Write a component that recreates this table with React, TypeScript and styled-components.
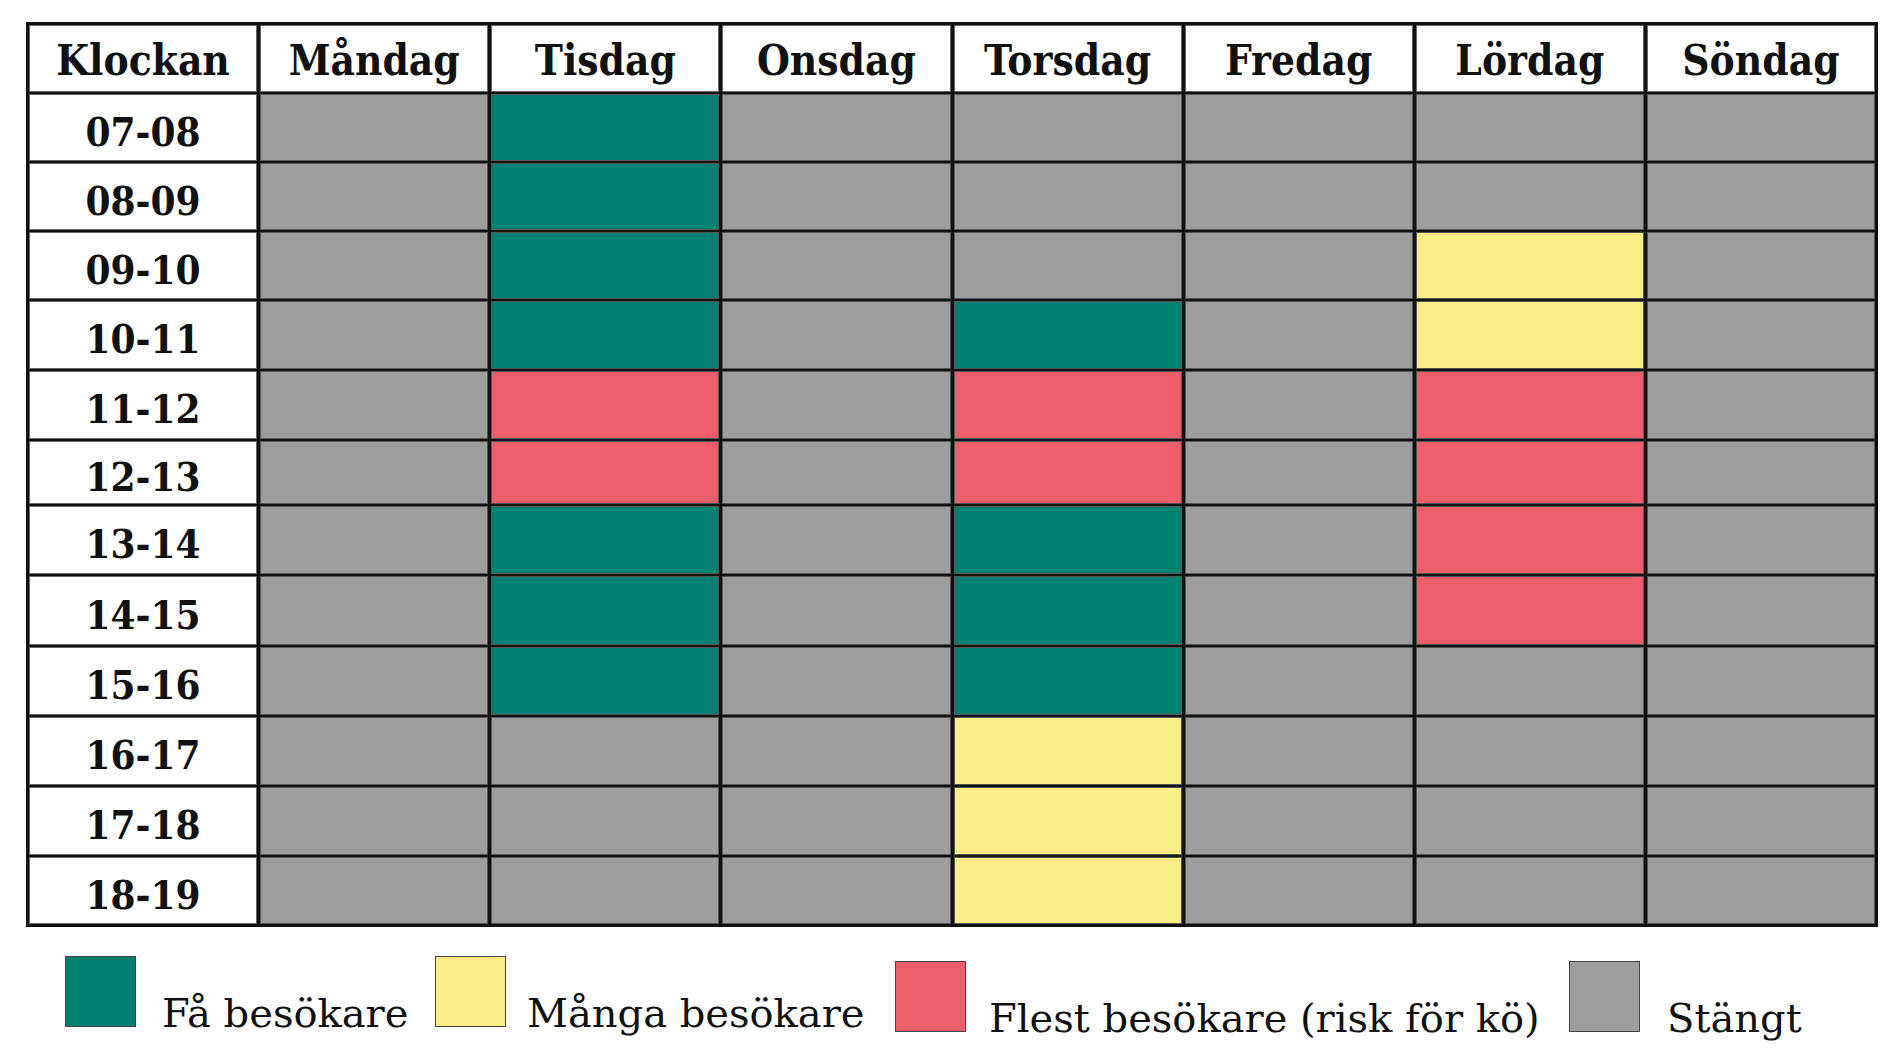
import React from "react";
import styled, { createGlobalStyle } from "styled-components";

const GlobalStyle = createGlobalStyle`
  html, body { margin: 0; padding: 0; background: #ffffff; }
  body { font-family: "DejaVu Serif", "Liberation Serif", serif; color: #111; }
`;

type Level = "few" | "many" | "most" | "closed";

const COLORS: Record<Level, string> = {
  few: "#008070",
  many: "#f8ed87",
  most: "#ec5f6a",
  closed: "#9d9d9c",
};

const DAYS = ["Måndag", "Tisdag", "Onsdag", "Torsdag", "Fredag", "Lördag", "Söndag"];
const HOURS = ["07-08", "08-09", "09-10", "10-11", "11-12", "12-13", "13-14", "14-15", "15-16", "16-17", "17-18", "18-19"];

const c: Level = "closed";
const f: Level = "few";
const m: Level = "many";
const r: Level = "most";

// rows = hours, cols = days
const DATA: Level[][] = [
  [c, f, c, c, c, c, c],
  [c, f, c, c, c, c, c],
  [c, f, c, c, c, m, c],
  [c, f, c, f, c, m, c],
  [c, r, c, r, c, r, c],
  [c, r, c, r, c, r, c],
  [c, f, c, f, c, r, c],
  [c, f, c, f, c, r, c],
  [c, f, c, f, c, c, c],
  [c, c, c, m, c, c, c],
  [c, c, c, m, c, c, c],
  [c, c, c, m, c, c, c],
];

const Page = styled.div`
  padding: 22px 0 0 26px;
  width: 1900px;
  height: 1050px;
  box-sizing: border-box;
  overflow: hidden;
`;

const Table = styled.div`
  display: grid;
  width: 1852px;
  box-sizing: border-box;
  grid-template-columns: repeat(8, 1fr);
  grid-template-rows: 67px 67px 67px 67px 68px 68px 63px 68px 69px 68px 68px 68px 67px;
  column-gap: 3px;
  row-gap: 2px;
  background: #111;
  border: 3px solid #111;
`;

const HeadCell = styled.div`
  background: #fff;
  display: flex;
  align-items: center;
  justify-content: center;
  font-family: "DejaVu Serif Condensed", "DejaVu Serif", serif;
  font-weight: 700;
  font-size: 42px;
  line-height: 1;
  padding-top: 5px;
  box-sizing: border-box;
  box-shadow: inset 0 0 0 1px #666;
`;

const HourCell = styled(HeadCell)`
  font-size: 40px;
  padding-top: 8px;
`;

const Slot = styled.div<{ $level: Level }>`
  background: ${(p) => COLORS[p.$level]};
  box-shadow: inset 0 0 0 1px #555;
`;

const Legend = styled.div`
  display: flex;
  align-items: flex-start;
  padding-left: 39px;
  margin-top: 29px;
`;

const LegendItem = styled.div<{ $width?: number; $drop?: number }>`
  display: flex;
  align-items: flex-end;
  flex: 0 0 auto;
  width: ${(p) => (p.$width ? `${p.$width}px` : "auto")};
  margin-top: ${(p) => p.$drop ?? 0}px;
`;

const Swatch = styled.div<{ $level: Level }>`
  width: 71px;
  height: 71px;
  box-sizing: border-box;
  background: ${(p) => COLORS[p.$level]};
  border: 1px solid #444;
`;

const LegendText = styled.span<{ $gap: number }>`
  margin-left: ${(p) => p.$gap}px;
  font-family: "DejaVu Serif", serif;
  font-size: 40px;
  line-height: 40px;
  margin-bottom: -6px;
  white-space: nowrap;
`;

export default function App() {
  return (
    <>
      <GlobalStyle />
      <Page>
        <Table>
          <HeadCell>Klockan</HeadCell>
          {DAYS.map((d) => (
            <HeadCell key={d}>{d}</HeadCell>
          ))}
          {HOURS.map((h, i) => (
            <React.Fragment key={h}>
              <HourCell>{h}</HourCell>
              {DATA[i].map((lvl, j) => (
                <Slot key={j} $level={lvl} />
              ))}
            </React.Fragment>
          ))}
        </Table>
        <Legend>
          <LegendItem $width={370}>
            <Swatch $level="few" />
            <LegendText $gap={26}>Få besökare</LegendText>
          </LegendItem>
          <LegendItem $width={460}>
            <Swatch $level="many" />
            <LegendText $gap={21}>Många besökare</LegendText>
          </LegendItem>
          <LegendItem $width={674} $drop={5}>
            <Swatch $level="most" />
            <LegendText $gap={23}>Flest besökare (risk för kö)</LegendText>
          </LegendItem>
          <LegendItem $drop={5}>
            <Swatch $level="closed" />
            <LegendText $gap={27}>Stängt</LegendText>
          </LegendItem>
        </Legend>
      </Page>
    </>
  );
}
